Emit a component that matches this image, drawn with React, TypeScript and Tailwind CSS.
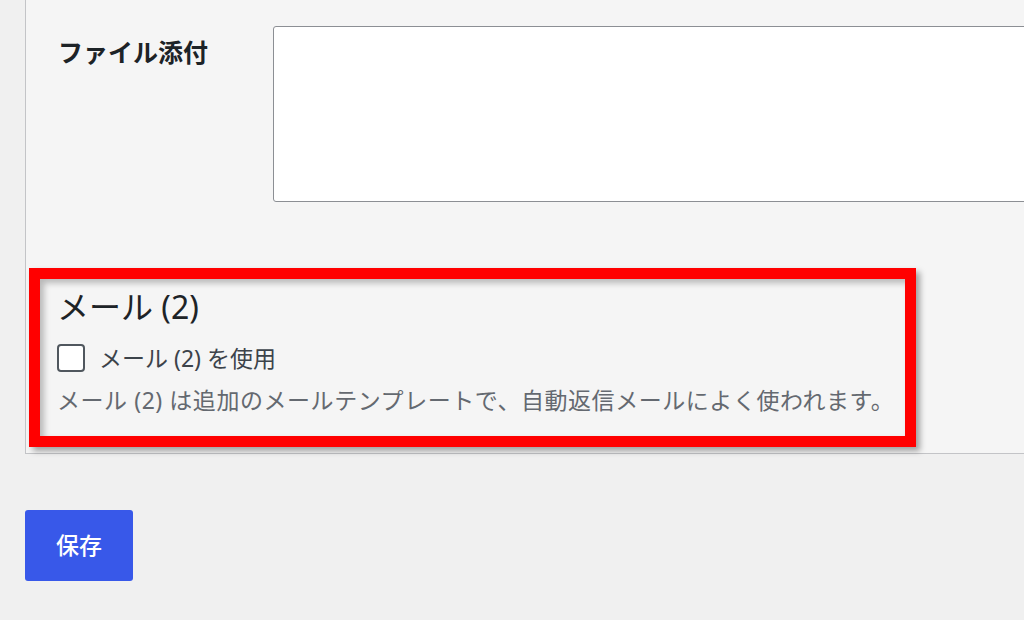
import React from 'react';

const font = { fontFamily: '"Noto Sans", "Noto Sans CJK JP", sans-serif' };

export default function App() {
  return (
    <div className="h-[620px] w-[1024px] overflow-hidden bg-[#f0f0f0] pl-[25px]" style={font}>
      {/* Settings panel */}
      <div className="w-[1100px] border-l border-b border-[#c3c4c7] bg-[#f5f5f5] pt-[26px] pb-[6px]">
        <div className="flex">
          <div className="w-[247px] shrink-0 pl-[32px] pt-[10px] text-[25px] font-bold leading-[32px] text-[#1d2327]">
            ファイル添付
          </div>
          <div className="h-[176px] w-[820px] rounded-[3px] border border-[#8c8f94] bg-white" />
        </div>

        {/* Highlighted box */}
        <div className="ml-[3px] mt-[66px] h-[179px] w-[887px] border-[11px] border-[#ff0000] pl-[17px] pt-[7px] shadow-[4px_4px_6px_rgba(0,0,0,0.35),inset_4px_4px_6px_rgba(0,0,0,0.25)]">
          <h2 className="text-[32px] leading-[42px] text-[#1d2327]">メール (2)</h2>
          <label className="mt-[16px] flex items-center gap-[14px]">
            <span className="h-[28px] w-[28px] shrink-0 rounded-[4px] border-2 border-[#50575e] bg-white" />
            <span className="text-[23px] leading-[28px] text-[#3c434a]">メール (2) を使用</span>
          </label>
          <p className="mt-[13px] text-[23px] leading-[30px] tracking-[0.55px] text-[#646970]">
            メール (2) は追加のメールテンプレートで、自動返信メールによく使われます。
          </p>
        </div>
      </div>

      <button className="mt-[56px] flex h-[71px] w-[108px] items-center justify-center rounded-[3px] bg-[#3858e9] text-[23px] font-medium text-white">
        保存
      </button>
    </div>
  );
}
